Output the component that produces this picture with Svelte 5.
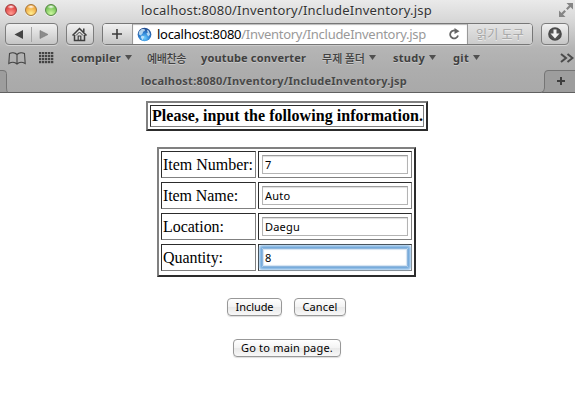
<script>
  const bookmarks = [
    { label: 'compiler', left: 71, width: 50, menu: true },
    { label: '예배찬송', left: 147, width: 39, menu: false, ko: true },
    { label: 'youtube converter', left: 201, width: 105, menu: false },
    { label: '무제 폴더', left: 322, width: 43, menu: true, ko: true },
    { label: 'study', left: 393, width: 32, menu: true },
    { label: 'git', left: 453, width: 16, menu: true }
  ].map((b, i, all) => ({ ...b, gap: b.left - (i ? all[i - 1].left + all[i - 1].width + (all[i - 1].menu ? 11 : 0) : 53) }));

  const rows = [
    { label: 'Item Number:', value: '7', width: 90 },
    { label: 'Item Name:', value: 'Auto', width: 75 },
    { label: 'Location:', value: 'Daegu', width: 61 },
    { label: 'Quantity:', value: '8', width: 60, focused: true }
  ];

  // Spreads a label's letters over the given width.
  function fit(node, width) {
    const natural = node.getBoundingClientRect().width;
    node.style.letterSpacing = (width - natural) / node.textContent.length + 'px';
  }
</script>

<div class="window">
  <header>
    <div class="titlebar">
      <div class="lights"><i class="red"></i><i class="amber"></i><i class="green"></i></div>
      <div class="title"><span use:fit={291}>localhost:8080/Inventory/IncludeInventory.jsp</span></div>
      <svg class="expand" width="14" height="14" viewBox="0 0 14 14">
        <path d="M7.500 0H14v6.500zM0 7.500V14h6.500z" fill="#858585" />
        <path d="M11.500 2.500L7.800 6.200M2.500 11.500L6.200 7.800" stroke="#858585" stroke-width="2.200" />
      </svg>
    </div>

    <div class="toolbar">
      <div class="btn nav">
        <svg width="53" height="21" viewBox="0 0 53 21">
          <path d="M9.500 10.500l8.500-4.500v9z" fill="#444" />
          <path d="M26.500 3v15" stroke="#a5a5a5" />
          <path d="M43 10.500l-8-4v8z" fill="#8c8c8c" stroke="#777" stroke-width=".6" />
        </svg>
      </div>
      <div class="btn home">
        <svg width="28" height="21" viewBox="0 0 28 21" fill="none" stroke="#3e3e3e" stroke-width="1.500">
          <path d="M6.500 11.500L13.500 4.500l7 7M8.500 11v5.500h10V11M17.800 8V4.500" />
          <path d="M10 11.500l3.500-3.500 3.500 3.500" stroke-width="1" />
          <path d="M12.200 16v-4h2.600v4" stroke-width="1.200" />
        </svg>
      </div>
      <div class="address">
        <div class="plus">
          <svg width="30" height="20" viewBox="0 0 30 20"><path d="M9 10h10M14 5v10" stroke="#3b3b3b" stroke-width="1.600" /></svg>
        </div>
        <div class="url">
          <svg width="15" height="15" viewBox="0 0 16 16">
            <defs>
              <radialGradient id="globe" cx="50%" cy="75%" r="70%"><stop offset="0" stop-color="#6fd0ff" /><stop offset=".5" stop-color="#2f84d6" /><stop offset="1" stop-color="#234d91" /></radialGradient>
            </defs>
            <circle cx="8" cy="8" r="7.300" fill="url(#globe)" />
            <path d="M2 5l3-3 3 0 .5 2-2 1-.5 2-2 2-2-1zM10.500 3l2 1 1.500 4-2 2-2-3 1.500-1zM5 9l3 1-1 2-1 2-2-3z" fill="#d6eefb" opacity=".8" />
          </svg>
          <span class="urltext" use:fit={269}><b>localhost:8080</b>/Inventory/IncludeInventory.jsp</span>
          <svg class="reload" width="12" height="13" viewBox="0 0 12 13">
            <path d="M8.500 3.200A4 4 0 1 0 10 7.500" fill="none" stroke="#666" stroke-width="1.800" />
            <path d="M6.500 0v6l5-2.800z" fill="#666" />
          </svg>
        </div>
        <div class="reader"><span use:fit={48}>읽기 도구</span></div>
      </div>
      <div class="btn down">
        <svg width="26" height="20" viewBox="0 0 26 20">
          <circle cx="13" cy="10" r="6" fill="#555" stroke="#4a4a4a" stroke-width="1.700" />
          <path d="M11.500 5.500h3v4h3L13 14.500 8.500 9.500h3z" fill="#f2f2f2" />
        </svg>
      </div>
    </div>

    <div class="bookmarks">
      <svg width="18" height="13" viewBox="0 0 18 13" fill="none" stroke="#444" stroke-width="1.100">
        <path d="M9 2.500C7 .5 3.500.5 1.500 1.500L.8 11.500C3.500 10 7 10 9 12c2-2 5.500-2 8.200-.5l-.7-10C14.500.5 11 .5 9 2.500zV12" />
      </svg>
      <svg class="grid" width="15" height="12" viewBox="0 0 15 12">
        {#each [0, 3, 6, 9] as y}
          {#each [0, 3, 6, 9, 12] as x}<rect {x} {y} width="2.300" height="2.200" fill="#444" />{/each}
        {/each}
      </svg>
      {#each bookmarks as b}
        <span class="mark" class:ko={b.ko} style="margin-left:{b.gap}px;width:{b.width}px"><span use:fit={b.width}>{b.label}</span></span>
        {#if b.menu}<svg class="caret" width="7" height="5" viewBox="0 0 7 5"><path d="M0 0h7L3.500 5z" fill="#505050" /></svg>{/if}
      {/each}
      <svg class="more" width="14" height="10" viewBox="0 0 14 10" fill="none" stroke="#4b4b4b" stroke-width="2"><path d="M1 1l5 4-5 4M7.500 1l5 4-5 4" /></svg>
    </div>

    <div class="tabs">
      <svg width="8" height="23" viewBox="0 0 8 23"><path d="M0 0h3q3 0 3 3v15q0 4 2 4H0z" fill="#9d9d9d" /><path d="M0 .5h3q3.500 0 3.500 3v14.500q0 4 1.500 4.500" fill="none" stroke="#757575" /></svg>
      <div class="tab"><span use:fit={266}>localhost:8080/Inventory/IncludeInventory.jsp</span></div>
      <svg width="34" height="23" viewBox="0 0 34 23">
        <path d="M34 0H7Q4 0 4 3v15q0 4-4 4h34z" fill="#9d9d9d" />
        <path d="M34 .5H7Q3.500.5 3.500 4v14Q3.500 22 0 22.500" fill="none" stroke="#757575" />
        <path d="M16 11h8M20 7v8" stroke="#3e3e3e" stroke-width="2" />
      </svg>
    </div>
  </header>

  <main>
    <div class="box heading"><div class="cell"><span use:fit={271}>Please, input the following information.</span></div></div>

    <div class="box form">
      {#each rows as row}
        <div class="cell label"><span use:fit={row.width}>{row.label}</span></div>
        <div class="cell"><div class="field" class:focused={row.focused}>{row.value}</div></div>
      {/each}
    </div>

    <div class="actions">
      <button style="width:55px"><span use:fit={38}>Include</span></button>
      <button style="width:52px"><span use:fit={35}>Cancel</span></button>
    </div>
    <div class="actions second">
      <button style="width:108px"><span use:fit={92}>Go to main page.</span></button>
    </div>
  </main>
</div>

<style>
  :global(body) { margin: 0; background: #fff; overflow: hidden; }
  * { box-sizing: border-box; }
  svg { display: block; flex: none; }
  span { white-space: nowrap; }
  .window { width: 575px; height: 400px; overflow: hidden; background: #fff; font-family: "Noto Sans", "Noto Sans CJK KR", sans-serif; }
  header { height: 93px; background: linear-gradient(#eaeaea 0, #d6d6d6 22px, #b5b5b5 48px, #adadad 70px, #a9a9a9 92px); border-bottom: 1px solid #606060; }
  .titlebar { height: 23px; display: flex; padding: 0 2px 0 5px; }
  .lights { display: flex; gap: 8px; width: 136px; padding-top: 4px; }
  .lights i { width: 12px; height: 12px; border-radius: 50%; border: 1px solid; box-shadow: 0 1px 0 #fff8; }
  .red { background: radial-gradient(ellipse 4px 2px at 50% 18%, #fff, transparent), radial-gradient(circle at 50% 85%, #ff9b91, #df3d3d 75%); border-color: #a04040 !important; }
  .amber { background: radial-gradient(ellipse 4px 2px at 50% 18%, #fff, transparent), radial-gradient(circle at 50% 85%, #ffee91, #efa136 75%); border-color: #a7783a !important; }
  .green { background: radial-gradient(ellipse 4px 2px at 50% 18%, #fff, transparent), radial-gradient(circle at 50% 85%, #ccf89f, #6ebd50 75%); border-color: #568845 !important; }
  .title { flex: 1; font-size: 13px; line-height: 20px; color: #333; text-shadow: 0 1px 0 #fff8; }
  .expand { margin-top: 3px; }
  .toolbar { display: flex; gap: 8px; padding: 0 6px 0 5px; height: 22px; }
  .btn { height: 22px; border: 1px solid #7d7d7d; border-radius: 4px; background: linear-gradient(#f1f1f1, #c5c5c5); box-shadow: 0 1px 0 #d5d5d5; display: flex; align-items: center; justify-content: center; }
  .nav { width: 53px; }
  .home, .down { width: 28px; }
  .address { flex: 1; display: flex; height: 22px; border: 1px solid #777; border-radius: 4px; overflow: hidden; background: #fff; box-shadow: 0 1px 0 #ccc; }
  .plus { width: 30px; border-right: 1px solid #999; background: linear-gradient(#f1f1f1, #c5c5c5); }
  .url { flex: 1; display: flex; align-items: center; padding: 0 7px 0 4px; font-size: 13px; color: #999; box-shadow: inset 0 1px 1px #bbb; }
  .urltext { margin-left: 5px; line-height: 20px; }
  .url b { font-weight: 400; color: #000; }
  .reload { margin-left: auto; }
  .reader { width: 65px; border-left: 1px solid #999; background: linear-gradient(#e4e4e4, #ccc); color: #a3a3a3; font: 12px/20px "Noto Sans CJK KR", sans-serif; padding-left: 8px; text-shadow: 0 1px 0 #eee; }
  .bookmarks { height: 25px; display: flex; align-items: center; padding: 1px 2px 0 8px; font-size: 11px; font-weight: 700; color: #404040; text-shadow: 0 1px 0 #c8c8c8; }
  .grid { margin-left: 13px; margin-right: -1px; }
  .mark { flex: none; line-height: 18px; }
  .ko { font-family: "Noto Sans CJK KR", sans-serif; font-weight: 500; }
  .caret { margin-left: 4px; margin-top: -1px; }
  .more { margin-left: auto; margin-right: -1px; }
  .tabs { height: 23px; display: flex; }
  .tab { flex: 1; padding-left: 133px; font-size: 11px; line-height: 21px; font-weight: 700; color: #484848; text-shadow: 0 1px 0 #c4c4c4; }
  main { display: flex; flex-direction: column; padding-top: 8px; font-family: "Liberation Serif", serif; color: #000; }
  .box { border: 2px solid; border-color: #808080 #2c2c2c #2c2c2c #808080; }
  .cell { border: 1px solid; border-color: #2c2c2c #808080 #808080 #2c2c2c; }
  .heading { width: 282px; height: 30px; margin-left: 146px; padding: 2px; }
  .heading .cell { height: 22px; padding-left: 1px; font-size: 16px; line-height: 20px; font-weight: 700; }
  .form { width: 259px; height: 130px; margin: 16px 0 0 157px; padding: 2px; display: grid; grid-template-columns: 95px 154px; grid-auto-rows: 27px; gap: 4px 2px; }
  .form .cell { padding: 3px; }
  .form .label { padding: 0 0 0 1px; font-size: 16px; line-height: 25px; }
  .field { width: 146px; height: 19px; border: 1px solid #b4b4b4; border-top-color: #9c9c9c; box-shadow: inset 0 1px 1px #ddd; padding-left: 2px; font: 11px/18px "Noto Sans", sans-serif; letter-spacing: .2px; }
  .focused { border-color: #8eb6dd; border-radius: 1px; box-shadow: 0 0 2px 1px #6ba3d8, 0 0 2px 3px #9cc5e9, inset 0 0 1px 1px #d3e3f2; }
  .actions { display: flex; gap: 12px; padding-left: 227px; margin-top: 21px; }
  .second { padding-left: 233px; margin-top: 23px; }
  button { height: 18px; padding: 0; border: 1px solid #989898; border-radius: 4px; background: linear-gradient(#fff, #f3f3f3 50%, #e9e9e9 52%, #f8f8f8); box-shadow: 0 1px 1px #ddd; font: 11px/16px "Noto Sans", sans-serif; color: #000; }
</style>
